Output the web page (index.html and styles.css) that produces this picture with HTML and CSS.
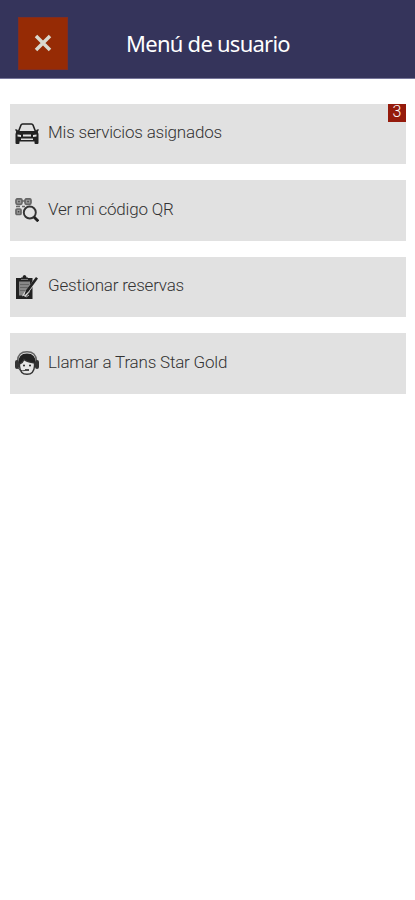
FILE: index.html
```html
<!DOCTYPE html>
<html lang="es">

<head>
    <meta charset="utf-8">
    <title>Menú de usuario</title>
    <link rel="stylesheet" href="styles.css">
</head>

<body>
    <header class="header">
        <button type="button" class="close" aria-label="Cerrar">
            <svg width="20" height="20" viewBox="0 0 20 20">
                <path d="M3 3L17 17M17 3L3 17" />
            </svg>
        </button>
        <h1>Menú de usuario</h1>
    </header>
    <nav class="menu">
        <a class="item">
            <svg class="icon" viewBox="0 0 24 24">
                <path d="M3.5 9.5L6 3Q6.4 2 7.5 2H16.5Q17.6 2 18 3L20.5 9.5" fill="none" stroke="#222" stroke-width="1.6" />
                <path transform="translate(0 -1)" fill="#222" fill-rule="evenodd" d="M0 8.5Q2.5 7.8 3.2 10H20.8Q21.5 7.8 24 8.5L22.8 10.8L23.5 13V22Q23.5 23 22.5 23H20.5Q19.5 23 19.5 22V20.5H4.5V22Q4.5 23 3.5 23H1.5Q.5 23 .5 22V13L1.2 10.8ZM2.5 13.5V15.5L6 16V14ZM21.5 13.5V15.5L18 16V14ZM8 13.5V15.5H16V13.5ZM6 17.5V19H18V17.5Z" />
            </svg>
            <span class="label">Mis servicios asignados</span>
            <span class="badge">3</span>
        </a>
        <a class="item">
            <svg class="icon" viewBox="0 0 24 24">
                <g fill="#999" stroke="#666" stroke-width="1.7">
                    <rect x="1" y=".8" width="6" height="5.5" rx="1.5" />
                    <rect x="10" y=".8" width="6" height="5.5" rx="1.5" />
                    <rect x="1" y="11" width="5" height="5.5" rx="1" />
                    <path d="M7 3H10M1 8.5H5M7 8.5H10" />
                </g>
                <g fill="#444">
                    <rect x="3.2" y="2.8" width="1.5" height="1.5" />
                    <rect x="12.3" y="2.8" width="1.5" height="1.5" />
                    <rect x="2.8" y="13" width="1.5" height="1.5" />
                </g>
                <circle cx="14.8" cy="14.5" r="6" fill="#e2e2e2" stroke="#333" stroke-width="1.9" />
                <path d="M19 19L23.3 23.3" stroke="#222" stroke-width="2.8" />
            </svg>
            <span class="label">Ver mi código QR</span>
        </a>
        <a class="item">
            <svg class="icon" viewBox="0 0 24 24">
                <path fill="#222" d="M1 3H6V2.5H7.5Q7.5 0 9.500 0T11.500 2.500H13V3H17.500V24H1Z" />
                <path fill="#888" d="M4 6.500H15V17L11.500 20.500H4Z" />
                <path d="M5 9.500H14M5 12.500H13M5 15.500H11" stroke="#666" />
                <path d="M6 4.500H13" stroke="#777" />
                <path d="M22 3.500L12.500 16L9 21" stroke="#e2e2e2" stroke-width="3.600" />
                <path fill="#222" d="M21 2L23 3.500L13.500 16.500L9 21L11 15Z" />
                <path d="M7 21Q9 19 10 21T14 20" fill="none" stroke="#bbb" />
            </svg>
            <span class="label">Gestionar reservas</span>
        </a>
        <a class="item">
            <svg class="icon" viewBox="0 0 24 24">
                <path d="M2.500 10Q3 .8 12 .8T21.500 10" fill="none" stroke="#666" stroke-width="1.500" />
                <path d="M3.500 12Q3 2.500 12 2.500T20.500 12V15H3.500Z" fill="#222" />
                <path d="M4.500 13Q8 11.500 9 8.500Q12 11 19.500 12V15Q19 23.300 12 23.300T4.500 15Z" fill="#e6e6e6" stroke="#333" stroke-width="1.400" />
                <rect x="0" y="9" width="4" height="9" rx="2" fill="#333" />
                <rect x="20" y="9" width="4" height="9" rx="2" fill="#333" />
                <circle cx="9" cy="14.500" r="1" fill="#222" />
                <circle cx="15" cy="14.500" r="1" fill="#222" />
                <path d="M3 17Q5 20.500 10 19.500" fill="none" stroke="#444" />
                <path d="M10 19H14" stroke="#222" stroke-width="1.600" />
            </svg>
            <span class="label">Llamar a Trans Star Gold</span>
        </a>
    </nav>
</body>

</html>
```
FILE: styles.css
```css
body {
    margin: 0;
    background: #fff;
    font-family: Roboto, sans-serif;
}

.header {
    display: grid;
    grid-template-columns: 50px 1fr 50px;
    align-items: center;
    box-sizing: border-box;
    height: 79px;
    padding: 8px 17px 0 18px;
    background: #35345b;
    border-bottom: 1px solid #77769a;
}

.header h1 {
    margin: 0;
    color: #fff;
    font-family: "Noto Sans", sans-serif;
    font-size: 22px;
    font-weight: 400;
    letter-spacing: -0.75px;
    line-height: 30px;
    text-align: center;
}

.close {
    display: flex;
    align-items: center;
    justify-content: center;
    width: 50px;
    height: 53px;
    padding: 0;
    background: #962b05;
    border: 1px solid #812c20;
}

.close svg {
    fill: none;
    stroke: #d9d9cf;
    stroke-width: 3.5;
}

.menu {
    display: flex;
    flex-direction: column;
    gap: 16px;
    padding: 24.5px 9px 0 10px;
}

.item {
    position: relative;
    display: flex;
    align-items: center;
    box-sizing: border-box;
    height: 60.5px;
    padding-left: 5px;
    background: #e1e1e1;
}

.icon {
    width: 24px;
    height: 24px;
    margin-right: 9px;
}

.label {
    color: #333;
    font-size: 17px;
    font-weight: 300;
    letter-spacing: -0.2px;
    line-height: 20px;
    padding-bottom: 3px;
}

.badge {
    position: absolute;
    top: 0;
    right: 0;
    width: 18px;
    height: 18px;
    background: #951b0c;
    color: #fff;
    font-size: 16px;
    font-weight: 300;
    line-height: 16px;
    text-align: center;
}
```
